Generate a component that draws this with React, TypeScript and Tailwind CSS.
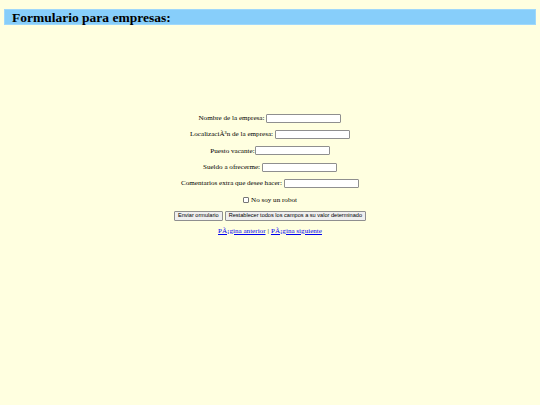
import { useState } from 'react';

type Field = {
    id: string;
    label: string;
    tight?: boolean;
};

const fields: Field[] = [
    { id: 'nombre', label: 'Nombre de la empresa:' },
    { id: 'localizacion', label: 'LocalizaciÃ³n de la empresa:' },
    { id: 'puesto', label: 'Puesto vacante:', tight: true },
    { id: 'sueldo', label: 'Sueldo a ofrecerme:' },
    { id: 'comentarios', label: 'Comentarios extra que desee hacer:' },
];

const inputClass =
    'h-[9px] w-[75px] border border-[#8f8f8f] bg-white px-[1px] text-[7px] outline-none rounded-[1px]';

const buttonClass =
    'h-[10px] rounded-[1px] border border-[#8f8f8f] bg-[#efefef] px-[3px] text-[5.6px] leading-none text-black';

export default function App() {
    const [robot, setRobot] = useState(false);

    return (
        <div className="min-h-[405px] bg-[#ffffe0] pt-[9px] font-['Liberation_Serif',serif] text-black">
            <h1 className="mx-[4px] h-[16px] border border-[#9fd8fb] bg-[#87cefa] pl-[7px] text-[13.5px] font-bold leading-[15px]">
                Formulario para empresas:
            </h1>

            <form className="mt-[85px] flex flex-col items-center text-[7.1px]" onSubmit={(e) => e.preventDefault()}>
                {fields.map((field) => (
                    <div key={field.id} className="flex h-[16.4px] items-center justify-center">
                        <label htmlFor={field.id}>{field.label}</label>
                        {!field.tight && <span className="w-[2px]" />}
                        <input id={field.id} type="text" className={inputClass} />
                    </div>
                ))}

                <div className="flex h-[16px] items-center justify-center">
                    <input
                        id="robot"
                        type="checkbox"
                        checked={robot}
                        onChange={(e) => setRobot(e.target.checked)}
                        className="mr-[2px] h-[6px] w-[6px] appearance-none rounded-[1px] border border-[#767676] bg-white"
                    />
                    <label htmlFor="robot">No soy un robot</label>
                </div>

                <div className="flex h-[16px] items-center justify-center gap-[2px] font-['Liberation_Sans',sans-serif]">
                    <button type="submit" className={buttonClass}>
                        Enviar ormulario
                    </button>
                    <button type="reset" className={buttonClass}>
                        Restablecer todos los campos a su valor determinado
                    </button>
                </div>

                <div className="flex h-[14px] items-center justify-center gap-[2px]">
                    <a href="#" className="text-[#0000ee] underline">
                        PÃ¡gina anterior
                    </a>
                    <span>|</span>
                    <a href="#" className="text-[#0000ee] underline">
                        PÃ¡gina siguiente
                    </a>
                </div>
            </form>
        </div>
    );
}
